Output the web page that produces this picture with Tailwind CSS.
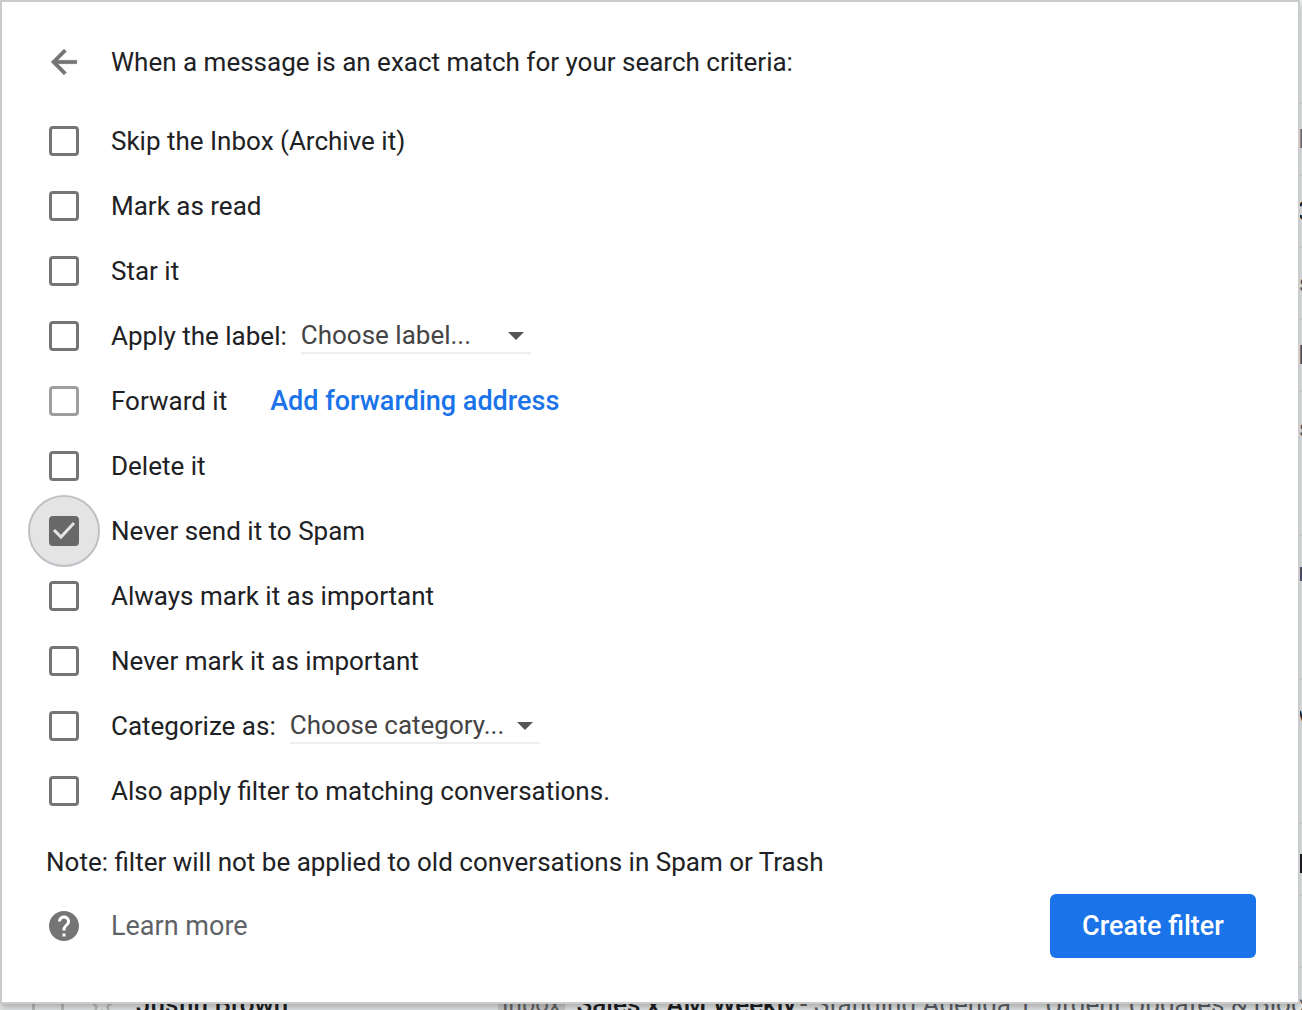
<!DOCTYPE html>
<html lang="en">
<head>
    <meta charset="UTF-8">
    <meta name="viewport" content="width=device-width, initial-scale=1.0">
    <title>Create filter</title>
    <script src="https://cdn.jsdelivr.net/npm/@tailwindcss/browser@4"></script>
</head>
<body class="relative min-h-screen overflow-hidden bg-[#eef1f1] font-['Roboto',sans-serif] text-[26px] leading-8 text-[#202124]">

    <!-- Inbox behind the dialog -->
    <div class="absolute inset-0 overflow-hidden pt-8" aria-hidden="true">
        <div class="flex h-[72px] items-center justify-end border-b-2 border-[#d8dede]"></div>
        <div class="flex h-[72px] items-center justify-end border-b-2 border-[#d8dede] text-gray-500"><span class="w-[4px]">I</span></div>
        <div class="flex h-[72px] items-center justify-end border-b-2 border-[#d8dede]"><span class="w-[4px]">3</span></div>
        <div class="flex h-[72px] items-center justify-end border-b-2 border-[#d8dede] text-gray-600"><span class="w-[3px]">s</span></div>
        <div class="flex h-[72px] items-center justify-end border-b-2 border-[#d8dede] text-gray-600"><span class="w-[4px]">I</span></div>
        <div class="flex h-[72px] items-center justify-end text-gray-600"><span class="w-[3px]">s</span></div>
        <div class="h-[72px] border-b-2 border-[#d8dede]"></div>
        <div class="flex h-[72px] items-center justify-end text-gray-600"><span class="w-[4px]">r</span></div>
        <div class="h-[72px] border-b-2 border-[#d8dede]"></div>
        <div class="flex h-[72px] items-center justify-end"><span class="w-[4px]">v</span></div>
        <div class="h-[72px] border-b-2 border-[#d8dede]"></div>
        <div class="flex h-[72px] items-center justify-end border-b-2 border-[#d8dede] font-bold"><span class="w-[4px]">p</span></div>
        <div class="h-[72px] border-b-2 border-[#d8dede]"></div>
        <div class="flex h-[72px] items-center whitespace-nowrap pl-8">
            <span class="h-8 w-8 shrink-0 border-3 border-[#c4c4c4]"></span>
            <svg class="ml-5 h-9 w-9 shrink-0" viewBox="0 0 24 24" fill="#c4c4c4"><path d="M22 9.24l-7.19-.62L12 2 9.19 8.63 2 9.24l5.46 4.73L5.82 21 12 17.27 18.18 21l-1.63-7.03L22 9.24zM12 15.4l-3.76 2.27 1-4.28-3.32-2.88 4.38-.38L12 6.1l1.71 4.04 4.38.38-3.32 2.88 1 4.28L12 15.4z"/></svg>
            <span class="ml-4 w-[362px] shrink-0 font-medium">Justin Brown</span>
            <span class="mr-3 bg-[#d4d4d4] px-1 text-2xl text-[#666]">Inbox</span>
            <span class="font-medium">Sales x AM Weekly</span>
            <span class="ml-1 text-[#5f6368]">- Standing Agenda 1. Urgent Updates &amp; Blockers</span>
        </div>
    </div>

    <form class="relative mr-0.5 border-2 border-[#cccccc] bg-white pt-7 pr-[42px] pb-11 pl-[26px] shadow-[0_4px_8px_rgba(0,0,0,0.3)]">
        <header class="flex h-16 items-center">
            <button type="button" aria-label="Back" class="flex w-[72px] justify-center">
                <svg class="h-[38px] w-[38px]" viewBox="0 0 24 24" fill="#757575" stroke="#757575" stroke-width="0.5"><path d="M20 11H7.83l5.59-5.59L12 4l-8 8 8 8 1.41-1.41L7.83 13H20v-2z"/></svg>
            </button>
            <h1 class="ml-[11px]">When a message is an exact match for your search criteria:</h1>
        </header>

        <div class="mt-[14px]">
            <div class="flex h-[65px] items-center">
                <span class="flex w-[72px] justify-center"><input id="archive" type="checkbox" class="h-[30px] w-[30px] appearance-none rounded-[4px] border-[3px] border-[#757575]"></span>
                <label for="archive" class="ml-[11px]">Skip the Inbox (Archive it)</label>
            </div>
            <div class="flex h-[65px] items-center">
                <span class="flex w-[72px] justify-center"><input id="read" type="checkbox" class="h-[30px] w-[30px] appearance-none rounded-[4px] border-[3px] border-[#757575]"></span>
                <label for="read" class="ml-[11px]">Mark as read</label>
            </div>
            <div class="flex h-[65px] items-center">
                <span class="flex w-[72px] justify-center"><input id="star" type="checkbox" class="h-[30px] w-[30px] appearance-none rounded-[4px] border-[3px] border-[#757575]"></span>
                <label for="star" class="ml-[11px]">Star it</label>
            </div>
            <div class="flex h-[65px] items-center">
                <span class="flex w-[72px] justify-center"><input id="label" type="checkbox" class="h-[30px] w-[30px] appearance-none rounded-[4px] border-[3px] border-[#757575]"></span>
                <label for="label" class="ml-[11px]">Apply the label:</label>
                <div class="relative ml-[14px]">
                    <select aria-label="Label" class="h-9 w-[230px] appearance-none border-b-2 border-[#eeeeee] text-[#444]">
                        <option>Choose label...</option>
                    </select>
                    <svg class="pointer-events-none absolute top-[14px] right-[7px] h-2 w-4" viewBox="0 0 16 8" fill="#555"><path d="M0 0h16L8 8z"/></svg>
                </div>
            </div>
            <div class="flex h-[65px] items-center">
                <span class="flex w-[72px] justify-center"><input id="forward" type="checkbox" disabled class="h-[30px] w-[30px] appearance-none rounded-[4px] border-[3px] border-[#9e9e9e]"></span>
                <label for="forward" class="ml-[11px]">Forward it</label>
                <a href="#" class="ml-[43px] text-[27px] font-medium text-[#1a73e8]">Add forwarding address</a>
            </div>
            <div class="flex h-[65px] items-center">
                <span class="flex w-[72px] justify-center"><input id="delete" type="checkbox" class="h-[30px] w-[30px] appearance-none rounded-[4px] border-[3px] border-[#757575]"></span>
                <label for="delete" class="ml-[11px]">Delete it</label>
            </div>
            <div class="flex h-[65px] items-center">
                <span class="relative flex h-[72px] w-[72px] items-center justify-center rounded-full border-2 border-[#bdc1c6] bg-[#e4e4e4]">
                    <input id="spam" type="checkbox" checked class="h-[30px] w-[30px] appearance-none rounded-[4px] bg-[#686868]">
                    <svg class="pointer-events-none absolute h-[30px] w-[30px]" viewBox="0 0 30 30" fill="none" stroke="#e4e4e4" stroke-width="3"><path d="M5 14l7 7L25 7"/></svg>
                </span>
                <label for="spam" class="ml-[11px]">Never send it to Spam</label>
            </div>
            <div class="flex h-[65px] items-center">
                <span class="flex w-[72px] justify-center"><input id="important" type="checkbox" class="h-[30px] w-[30px] appearance-none rounded-[4px] border-[3px] border-[#757575]"></span>
                <label for="important" class="ml-[11px]">Always mark it as important</label>
            </div>
            <div class="flex h-[65px] items-center">
                <span class="flex w-[72px] justify-center"><input id="unimportant" type="checkbox" class="h-[30px] w-[30px] appearance-none rounded-[4px] border-[3px] border-[#757575]"></span>
                <label for="unimportant" class="ml-[11px]">Never mark it as important</label>
            </div>
            <div class="flex h-[65px] items-center">
                <span class="flex w-[72px] justify-center"><input id="categorize" type="checkbox" class="h-[30px] w-[30px] appearance-none rounded-[4px] border-[3px] border-[#757575]"></span>
                <label for="categorize" class="ml-[11px]">Categorize as:</label>
                <div class="relative ml-[14px]">
                    <select aria-label="Category" class="h-9 w-[250px] appearance-none border-b-2 border-[#eeeeee] text-[#444]">
                        <option>Choose category...</option>
                    </select>
                    <svg class="pointer-events-none absolute top-[14px] right-[7px] h-2 w-4" viewBox="0 0 16 8" fill="#555"><path d="M0 0h16L8 8z"/></svg>
                </div>
            </div>
            <div class="flex h-[65px] items-center">
                <span class="flex w-[72px] justify-center"><input id="matching" type="checkbox" class="h-[30px] w-[30px] appearance-none rounded-[4px] border-[3px] border-[#757575]"></span>
                <label for="matching" class="ml-[11px]">Also apply filter to matching conversations.</label>
            </div>
        </div>

        <p class="mt-[23px] ml-[18px]">Note: filter will not be applied to old conversations in Spam or Trash</p>

        <footer class="mt-4 flex h-16 items-center">
            <span class="flex w-[72px] justify-center">
                <svg class="h-9 w-9" viewBox="0 0 24 24" fill="#757575"><path d="M12 2C6.48 2 2 6.48 2 12s4.48 10 10 10 10-4.48 10-10S17.52 2 12 2zm1 17h-2v-2h2v2zm2.07-7.75l-.9.92C13.45 12.9 13 13.5 13 15h-2v-.5c0-1.1.45-2.1 1.17-2.83l1.24-1.26c.37-.36.59-.86.59-1.41 0-1.1-.9-2-2-2s-2 .9-2 2H8c0-2.21 1.79-4 4-4s4 1.79 4 4c0 .88-.36 1.68-.93 2.25z"/></svg>
            </span>
            <a href="#" class="ml-[11px] text-[27px] text-[#5f6368]">Learn more</a>
            <button type="submit" class="ml-auto h-16 w-[206px] rounded-md bg-[#1a73e8] text-[27px] font-medium text-white">Create filter</button>
        </footer>
    </form>
</body>
</html>
